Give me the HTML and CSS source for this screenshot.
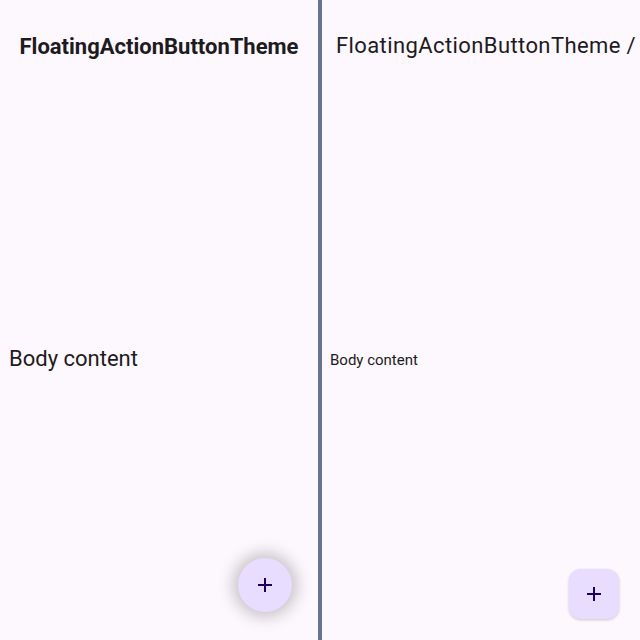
FILE: index.html
```html
<!DOCTYPE html>
<html lang="en">
<head>
    <meta charset="UTF-8">
    <title>FloatingActionButtonTheme</title>
    <link rel="stylesheet" href="styles.css">
</head>
<body>
    <div class="pane pane-left">
        <header class="bar bar-center">
            <h1 class="title title-bold">FloatingActionButtonTheme</h1>
        </header>
        <main class="body body-large">Body content</main>
        <button class="fab fab-round" aria-label="Add">
            <svg viewBox="0 0 24 24" width="24" height="24"><path d="M19 13h-6v6h-2v-6H5v-2h6V5h2v6h6v2z"/></svg>
        </button>
    </div>
    <div class="divider"></div>
    <div class="pane pane-right">
        <header class="bar">
            <h1 class="title title-wide">FloatingActionButtonTheme /</h1>
        </header>
        <main class="body body-small">Body content</main>
        <button class="fab fab-square" aria-label="Add">
            <svg viewBox="0 0 24 24" width="24" height="24"><path d="M19 13h-6v6h-2v-6H5v-2h6V5h2v6h6v2z"/></svg>
        </button>
    </div>
</body>
</html>
```

FILE: styles.css
```css
* {
    margin: 0;
    padding: 0;
    box-sizing: border-box;
}

body {
    font-family: Roboto, "Noto Sans", sans-serif;
    background: #fdf7fe;
    color: #1d1b20;
    display: flex;
    width: 640px;
    height: 640px;
    overflow: hidden;
}

.pane {
    position: relative;
    display: flex;
    flex-direction: column;
    height: 100%;
}

.pane-left {
    width: 318px;
    flex-shrink: 0;
}

.pane-right {
    flex: 1;
    min-width: 0;
}

.divider {
    width: 4px;
    flex-shrink: 0;
    background: #66758c;
}

.bar {
    height: 76px;
    display: flex;
    align-items: flex-start;
    padding: 33px 14px 0;
}

.bar-center {
    justify-content: center;
    padding-top: 34px;
}

.title {
    font-size: 22px;
    line-height: 26px;
    font-weight: 400;
    white-space: nowrap;
}

.title-bold {
    font-weight: 700;
}

.title-wide {
    letter-spacing: 0.4px;
}

.body {
    flex: 1;
    display: flex;
    align-items: center;
}

.body-large {
    font-size: 22px;
    padding-left: 9px;
}

.body-small {
    font-size: 15px;
    padding-left: 8px;
    padding-top: 4px;
}

.fab {
    position: absolute;
    border: none;
    background: #e9ddff;
    display: flex;
    align-items: center;
    justify-content: center;
    cursor: pointer;
}

.fab svg {
    fill: #21005d;
}

.fab-round {
    width: 54px;
    height: 54px;
    border-radius: 50%;
    left: 238px;
    top: 558px;
    box-shadow: 0 0 16px 5px rgba(0, 0, 0, 0.22);
}

.fab-square {
    width: 50px;
    height: 50px;
    border-radius: 12px;
    right: 21px;
    bottom: 21px;
    box-shadow: 0 1px 3px rgba(0, 0, 0, 0.2);
}
```
